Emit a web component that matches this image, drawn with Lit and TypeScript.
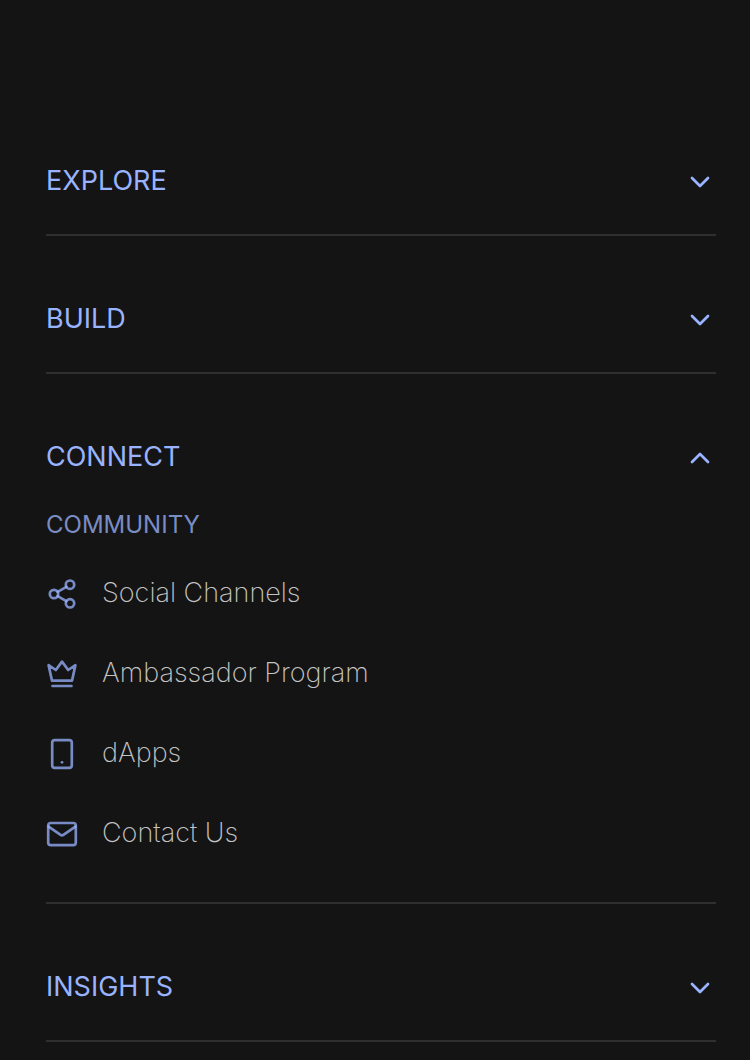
import { LitElement, html, css, svg } from "lit";
import { customElement, state } from "lit/decorators.js";

const icons: Record<string, unknown> = {
  share: svg`<circle cx="8" cy="16" r="4.2"/><circle cx="24" cy="6.7" r="4.2"/><circle cx="24" cy="25.3" r="4.2"/><path d="M11.6 13.9 20.4 8.8M11.6 18.1l8.8 5.1"/>`,
  crown: svg`<path d="M2.6 7.2 6 22.7h20L29.4 7.2 22.2 12 16 3.6 9.8 12Z"/><path d="M6.5 28h19"/>`,
  phone: svg`<rect x="6.2" y="2.2" width="19.6" height="27.6" rx="2.6"/><circle class="dot" cx="16" cy="24.3" r="1.4"/>`,
  mail: svg`<rect x="2.2" y="5" width="27.6" height="22.2" rx="2.6"/><path d="M2.6 8.6 14.6 16.8Q16 17.8 17.4 16.8L29.4 8.6"/>`,
};

interface Section {
  title: string;
  group?: string;
  links?: { label: string; icon: string }[];
}

const sections: Section[] = [
  { title: "EXPLORE" },
  { title: "BUILD" },
  {
    title: "CONNECT",
    group: "COMMUNITY",
    links: [
      { label: "Social Channels", icon: "share" },
      { label: "Ambassador Program", icon: "crown" },
      { label: "dApps", icon: "phone" },
      { label: "Contact Us", icon: "mail" },
    ],
  },
  { title: "INSIGHTS" },
];

@customElement("app-root")
export class AppRoot extends LitElement {
  @state() private open = "CONNECT";

  static styles = css`
    :host {
      display: block;
      box-sizing: border-box;
      min-height: 100vh;
      padding: 98px 34px 0 46px;
      background: #141414;
      font-family: Inter, "Liberation Sans", sans-serif;
    }
    .section {
      padding: 65px 0 35px;
      border-bottom: 2px solid #2f2f2f;
    }
    .heading {
      margin: 0;
      font: inherit;
    }
    .toggle {
      display: flex;
      align-items: center;
      justify-content: space-between;
      width: 100%;
      height: 36px;
      padding: 0;
      border: 0;
      background: none;
      color: #99b3ff;
      font: 400 27px/36px Inter, "Liberation Sans", sans-serif;
      text-align: left;
      cursor: pointer;
    }
    svg {
      display: block;
      flex: none;
      width: 32px;
      height: 32px;
      fill: none;
      stroke: #99b3ff;
      stroke-width: 2.7;
      stroke-linecap: round;
      stroke-linejoin: round;
    }
    .chevron,
    .icon {
      margin-top: 2px;
    }
    .group {
      margin: 0;
      padding-top: 32px;
      color: #7a8cc4;
      font-size: 24px;
      font-weight: 400;
      line-height: 36px;
    }
    .links {
      display: grid;
      gap: 16px;
      margin: 0;
      padding: 18px 0 2px;
      list-style: none;
    }
    .link {
      display: flex;
      align-items: center;
      gap: 24px;
      height: 64px;
      color: #c4c4c4;
      font-size: 27px;
      font-weight: 200;
      line-height: 36px;
      text-decoration: none;
    }
    .icon {
      stroke-opacity: 0.75;
    }
    .dot {
      fill: #99b3ff;
      fill-opacity: 0.75;
      stroke: none;
    }
  `;

  render() {
    return html`<nav>
      ${sections.map((s) => {
        const isOpen = this.open === s.title;
        return html`<section class="section">
          <h2 class="heading">
            <button
              class="toggle"
              aria-expanded=${isOpen ? "true" : "false"}
              @click=${() => (this.open = isOpen ? "" : s.title)}
            >
              <span>${s.title}</span>
              <svg class="chevron" viewBox="0 0 32 32" aria-hidden="true">
                <path d=${isOpen ? "M8 20l8-8 8 8" : "M8 12l8 8 8-8"} />
              </svg>
            </button>
          </h2>
          ${isOpen && s.links
            ? html`<h3 class="group">${s.group}</h3>
                <ul class="links">
                  ${s.links.map(
                    (l) => html`<li>
                      <a class="link" href="#">
                        <svg class="icon" viewBox="0 0 32 32" aria-hidden="true">${icons[l.icon]}</svg>
                        <span>${l.label}</span>
                      </a>
                    </li>`
                  )}
                </ul>`
            : ""}
        </section>`;
      })}
    </nav>`;
  }
}
